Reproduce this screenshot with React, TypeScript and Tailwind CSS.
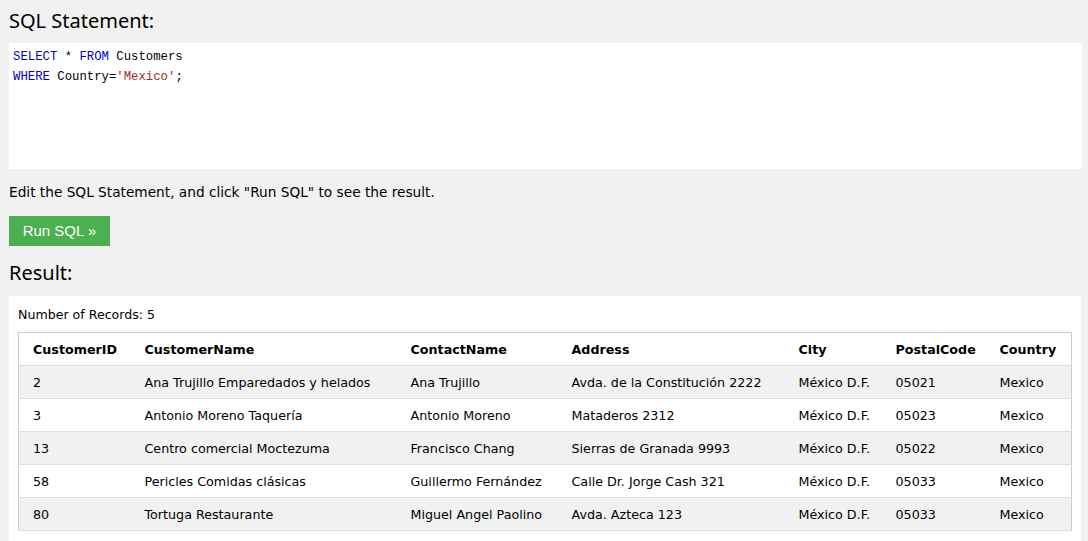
import React from 'react';

interface Customer {
  id: string;
  name: string;
  contact: string;
  address: string;
  city: string;
  postal: string;
  country: string;
}

const rows: Customer[] = [
  { id: '2', name: 'Ana Trujillo Emparedados y helados', contact: 'Ana Trujillo', address: 'Avda. de la Constitución 2222', city: 'México D.F.', postal: '05021', country: 'Mexico' },
  { id: '3', name: 'Antonio Moreno Taquería', contact: 'Antonio Moreno', address: 'Mataderos 2312', city: 'México D.F.', postal: '05023', country: 'Mexico' },
  { id: '13', name: 'Centro comercial Moctezuma', contact: 'Francisco Chang', address: 'Sierras de Granada 9993', city: 'México D.F.', postal: '05022', country: 'Mexico' },
  { id: '58', name: 'Pericles Comidas clásicas', contact: 'Guillermo Fernández', address: 'Calle Dr. Jorge Cash 321', city: 'México D.F.', postal: '05033', country: 'Mexico' },
  { id: '80', name: 'Tortuga Restaurante', contact: 'Miguel Angel Paolino', address: 'Avda. Azteca 123', city: 'México D.F.', postal: '05033', country: 'Mexico' },
];

const headers = ['CustomerID', 'CustomerName', 'ContactName', 'Address', 'City', 'PostalCode', 'Country'];
const widths = ['w-[118px]', 'w-[266px]', 'w-[161px]', 'w-[227px]', 'w-[97px]', 'w-[104px]', 'w-auto'];

function cellPad(i: number) {
  return i === 0 ? 'pl-[14px] pr-2' : 'px-2';
}

export default function App() {
  return (
    <div className="min-h-[541px] bg-[#f1f1f1] text-black font-['DejaVu_Sans',Verdana,sans-serif] px-[9px] pt-[6px] overflow-hidden">
      <h2 className="font-['Noto_Sans','Open_Sans',sans-serif] text-[20px] leading-[30px] font-normal mb-[7px]">
        SQL Statement:
      </h2>
      <div className="bg-white w-[1073px] h-[126px] px-[4px] pt-[4px] font-['Liberation_Mono',monospace] text-[12.3px] leading-[20px]">
        <div>
          <span className="text-[#0000cd]">SELECT</span> * <span className="text-[#0000cd]">FROM</span> Customers
        </div>
        <div>
          <span className="text-[#0000cd]">WHERE</span> Country=<span className="text-[#a52a2a]">'Mexico'</span>;
        </div>
      </div>
      <p className="text-[13.7px] leading-[20px] mt-[13px]">
        Edit the SQL Statement, and click "Run SQL" to see the result.
      </p>
      <button className="mt-[14px] bg-[#4caf50] text-white font-['Liberation_Sans',Arial,sans-serif] text-[15px] h-[30px] w-[101px] flex items-center justify-center">
        Run SQL »
      </button>
      <h2 className="font-['Noto_Sans','Open_Sans',sans-serif] text-[20px] leading-[30px] font-normal mt-[12px] mb-[8px]">
        Result:
      </h2>
      <div className="bg-white w-[1072px] px-[9px] pt-[11px] pb-[10px]">
        <div className="text-[12.6px] leading-[16px] mb-[9px]">Number of Records: 5</div>
        <table className="w-[1054px] border border-[#cccccc] border-collapse text-[12.7px] table-fixed">
          <thead>
            <tr className="h-[33px] bg-white">
              {headers.map((h, i) => (
                <th key={h} className={`${widths[i]} ${cellPad(i)} pt-[2px] text-left font-bold border-b border-[#dddddd]`}>
                  {h}
                </th>
              ))}
            </tr>
          </thead>
          <tbody>
            {rows.map((r, idx) => {
              const vals = [r.id, r.name, r.contact, r.address, r.city, r.postal, r.country];
              return (
                <tr key={r.id} className={`h-[33px] ${idx % 2 === 0 ? 'bg-[#f1f1f1]' : 'bg-white'} border-b border-[#dddddd]`}>
                  {vals.map((v, i) => (
                    <td key={i} className={`${cellPad(i)} pt-[2px] text-left whitespace-nowrap`}>
                      {v}
                    </td>
                  ))}
                </tr>
              );
            })}
          </tbody>
        </table>
      </div>
    </div>
  );
}
